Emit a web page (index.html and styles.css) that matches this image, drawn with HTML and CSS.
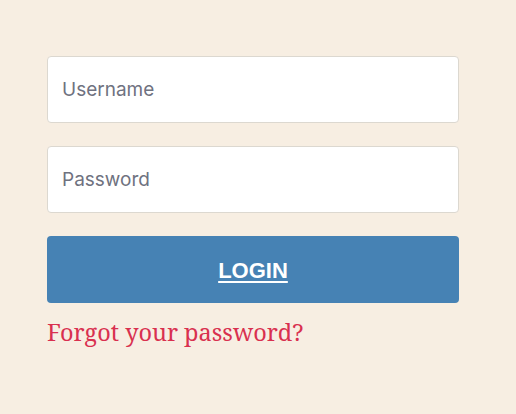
FILE: index.html
```html
<!DOCTYPE html>
<html lang="en">
<head>
    <meta charset="UTF-8">
    <title>Login</title>
    <link rel="stylesheet" href="styles.css">
</head>
<body>
<form class="login">
    <input class="field" type="text" placeholder="Username">
    <input class="field" type="password" placeholder="Password">
    <button class="login-btn" type="button">LOGIN</button>
    <a class="forgot" href="#">Forgot your password?</a>
</form>
</body>
</html>
```

FILE: styles.css
```css
body {
    margin: 0;
    background: #f7eee2;
    font-family: Inter, sans-serif;
}
.login {
    width: 412px;
    padding: 56px 0 0 47px;
    display: flex;
    flex-direction: column;
    gap: 23px;
}
.field {
    box-sizing: border-box;
    height: 67px;
    padding: 0 14px;
    background: white;
    border: 1px solid #dcd8d0;
    border-radius: 4px;
    font-family: Inter, sans-serif;
    font-size: 19px;
    color: #333;
}
.field::placeholder {
    color: #6f7280;
}
.login-btn {
    height: 67px;
    padding-top: 4px;
    background: #4682b4;
    border: none;
    border-radius: 4px;
    color: white;
    font-family: "Liberation Sans", Arial, sans-serif;
    font-weight: 700;
    font-size: 22px;
    text-decoration: underline;
    text-underline-offset: 3px;
}
.forgot {
    margin-top: -10px;
    color: #d9304f;
    text-decoration: none;
    font-family: "Noto Serif", "DejaVu Serif", serif;
    font-size: 23.5px;
}
```
